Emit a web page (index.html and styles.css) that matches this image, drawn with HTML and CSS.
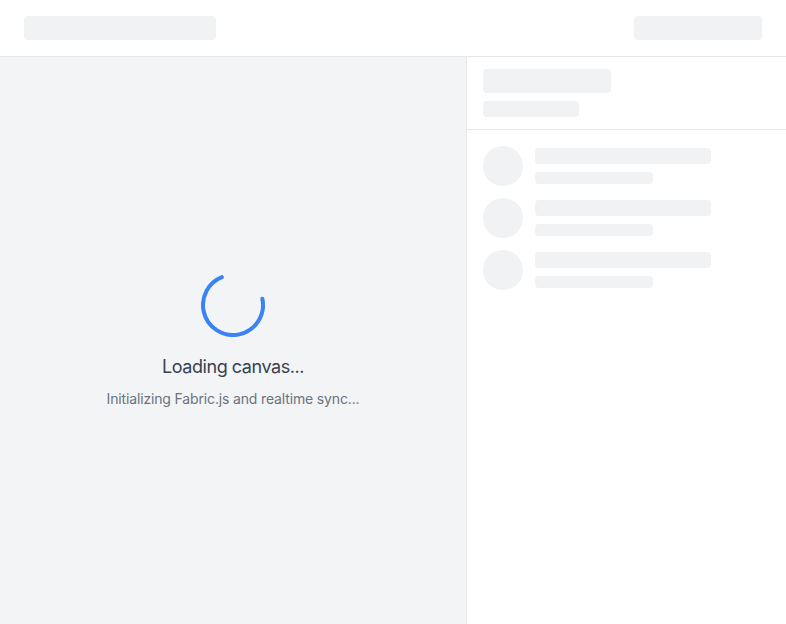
FILE: index.html
```html
<!DOCTYPE html>
<html lang="en">
<head>
<meta charset="utf-8">
<title>Loading canvas</title>
<link rel="stylesheet" href="styles.css">
</head>
<body>
<div class="app">
  <header class="topbar">
    <div class="skel skel-title"></div>
    <div class="skel skel-action"></div>
  </header>
  <div class="main">
    <section class="canvas-area">
      <div class="loader">
        <svg class="spinner" width="64" height="64" viewBox="0 0 64 64" aria-hidden="true">
          <circle cx="32" cy="32" r="30" fill="none" stroke="#3b82f6" stroke-width="4" stroke-linecap="round" stroke-dasharray="136 200" transform="rotate(-12 32 32)"/>
        </svg>
        <p class="loader-title">Loading canvas...</p>
        <p class="loader-sub">Initializing Fabric.js and realtime sync...</p>
      </div>
    </section>
    <aside class="sidebar">
      <div class="sidebar-head">
        <div class="skel skel-h1"></div>
        <div class="skel skel-h2"></div>
      </div>
      <ul class="list">
        <li class="row">
          <div class="skel avatar"></div>
          <div class="lines">
            <div class="skel line-a"></div>
            <div class="skel line-b"></div>
          </div>
        </li>
        <li class="row">
          <div class="skel avatar"></div>
          <div class="lines">
            <div class="skel line-a"></div>
            <div class="skel line-b"></div>
          </div>
        </li>
        <li class="row">
          <div class="skel avatar"></div>
          <div class="lines">
            <div class="skel line-a"></div>
            <div class="skel line-b"></div>
          </div>
        </li>
      </ul>
    </aside>
  </div>
</div>
</body>
</html>
```
FILE: styles.css
```css
* { box-sizing: border-box; }
html, body { margin: 0; padding: 0; height: 100%; }
body {
  font-family: Inter, "Noto Sans", "Liberation Sans", sans-serif;
  background: #ffffff;
  color: #374151;
}
.app {
  display: flex;
  flex-direction: column;
  height: 100vh;
}
.skel {
  background: #f1f2f4;
  border-radius: 4px;
}
.topbar {
  display: flex;
  justify-content: space-between;
  align-items: center;
  padding: 16px 24px;
  border-bottom: 1px solid #e5e7eb;
  background: #fff;
}
.skel-title { width: 192px; height: 24px; }
.skel-action { width: 128px; height: 24px; }
.main {
  flex: 1;
  display: flex;
  min-height: 0;
}
.canvas-area {
  flex: 1;
  background: #f3f4f6;
  display: flex;
  align-items: center;
  justify-content: center;
}
.loader {
  display: flex;
  flex-direction: column;
  align-items: center;
  text-align: center;
}
.spinner { display: block; }
.loader-title {
  margin: 16px 0 0;
  font-size: 18px;
  line-height: 28px;
  font-weight: 400;
  letter-spacing: -0.45px;
  color: #374151;
}
.loader-sub {
  margin: 8px 0 0;
  font-size: 14px;
  line-height: 20px;
  letter-spacing: -0.15px;
  color: #6b7280;
}
.sidebar {
  width: 320px;
  border-left: 1px solid #e5e7eb;
  background: #fff;
  display: flex;
  flex-direction: column;
}
.sidebar-head {
  padding: 12px 16px;
  border-bottom: 1px solid #e5e7eb;
  display: flex;
  flex-direction: column;
  gap: 8px;
}
.skel-h1 { width: 128px; height: 24px; }
.skel-h2 { width: 96px; height: 16px; }
.list {
  list-style: none;
  margin: 0;
  padding: 16px;
  display: flex;
  flex-direction: column;
  gap: 12px;
}
.row {
  display: flex;
  align-items: center;
  gap: 12px;
}
.avatar {
  width: 40px;
  height: 40px;
  border-radius: 50%;
  flex: none;
}
.lines {
  display: flex;
  flex-direction: column;
  gap: 8px;
}
.line-a { width: 176px; height: 16px; }
.line-b { width: 118px; height: 12px; }
```
